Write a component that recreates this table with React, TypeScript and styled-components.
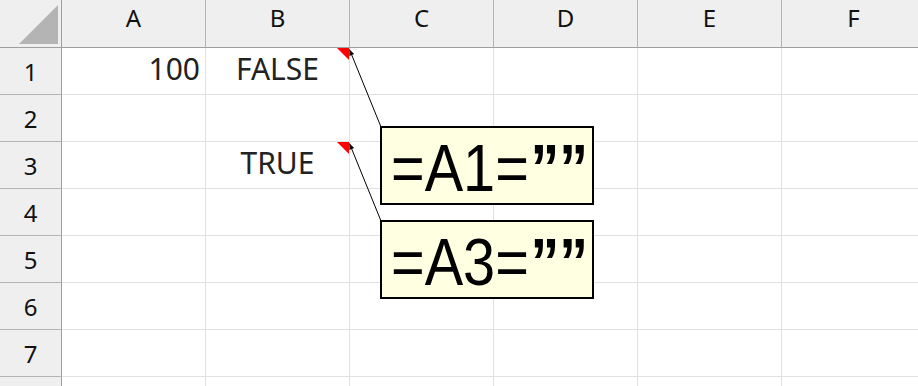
import React from "react";
import styled, { createGlobalStyle } from "styled-components";

const Global = createGlobalStyle`
  html, body { margin: 0; padding: 0; background: #ffffff; }
  body { width: 918px; height: 386px; overflow: hidden; }
`;

const Sheet = styled.div`
  position: relative;
  width: 918px;
  height: 386px;
  overflow: hidden;
  background: #ffffff;
  font-family: "Noto Sans", "Liberation Sans", sans-serif;
`;

const Grid = styled.div`
  display: grid;
  grid-template-columns: 62px repeat(6, 144px);
  grid-template-rows: 48px repeat(8, 47px);
`;

const Corner = styled.div`
  background: #efefef;
  border-right: 1px solid #9e9e9e;
  border-bottom: 1px solid #9e9e9e;
  box-sizing: border-box;
  position: relative;
`;

const ColHeader = styled.div`
  background: #efefef;
  border-right: 1px solid #b4b4b4;
  border-bottom: 1px solid #9e9e9e;
  box-sizing: border-box;
  display: flex;
  justify-content: center;
  align-items: flex-start;
  padding-top: 3px;
  font-size: 24px;
  line-height: 30px;
  color: #111111;
`;

const RowHeader = styled.div`
  background: #efefef;
  border-right: 1px solid #9e9e9e;
  border-bottom: 1px solid #b4b4b4;
  box-sizing: border-box;
  display: flex;
  justify-content: center;
  align-items: center;
  padding-top: 2px;
  font-size: 24px;
  line-height: 30px;
  color: #111111;
`;

const Cell = styled.div<{ $align: "left" | "center" | "right" }>`
  border-right: 1px solid #e1e1e1;
  border-bottom: 1px solid #e1e1e1;
  box-sizing: border-box;
  display: flex;
  align-items: flex-end;
  justify-content: ${(p) =>
    p.$align === "right" ? "flex-end" : p.$align === "center" ? "center" : "flex-start"};
  padding: 0 5px 10px 5px;
  font-size: 30px;
  line-height: 30px;
  color: #222222;
  white-space: nowrap;
`;

const Overlay = styled.svg`
  position: absolute;
  left: 0;
  top: 0;
  width: 918px;
  height: 386px;
  pointer-events: none;
`;

const CommentBox = styled.div<{ $top: number }>`
  position: absolute;
  left: 380px;
  top: ${(p) => p.$top}px;
  width: 214px;
  height: 79px;
  box-sizing: border-box;
  border: 2px solid #000000;
  background: #ffffe1;
  overflow: hidden;
  display: flex;
  align-items: center;
`;

const CommentText = styled.span`
  font-family: "Liberation Sans", Arial, sans-serif;
  font-size: 67px;
  line-height: 75px;
  padding-top: 4px;
  color: #000000;
  white-space: nowrap;
  display: inline-block;
  transform-origin: left center;
  transform: translateX(9px) scaleX(0.86);
`;

const Quotes = styled.span`
  font-weight: bold;
  letter-spacing: 0px;
  margin-left: 2px;
`;

const cols = ["A", "B", "C", "D", "E", "F"];
const rows = [1, 2, 3, 4, 5, 6, 7, 8];

const data: Record<string, { text: string; align: "left" | "center" | "right" }> = {
  "A1": { text: "100", align: "right" },
  "B1": { text: "FALSE", align: "center" },
  "B3": { text: "TRUE", align: "center" },
};

function Arrow({ x1, y1, x2, y2 }: { x1: number; y1: number; x2: number; y2: number }) {
  const dx = x2 - x1;
  const dy = y2 - y1;
  const len = Math.hypot(dx, dy);
  const ux = dx / len;
  const uy = dy / len;
  const bx = x1 + ux * 6;
  const by = y1 + uy * 6;
  const px = -uy * 2.6;
  const py = ux * 2.6;
  return (
    <g>
      <line x1={x1} y1={y1} x2={x2} y2={y2} stroke="#000" strokeWidth={1} />
      <polygon
        points={`${x1},${y1} ${bx + px},${by + py} ${bx - px},${by - py}`}
        fill="#000"
      />
    </g>
  );
}

export default function App() {
  return (
    <>
      <Global />
      <Sheet>
        <Grid>
          <Corner>
            <svg width="61" height="47" style={{ position: "absolute", left: 0, top: 0 }}>
              <polygon points="58,5 58,44 19,44" fill="#b4b4b4" />
            </svg>
          </Corner>
          {cols.map((c) => (
            <ColHeader key={c}>{c}</ColHeader>
          ))}
          {rows.map((r) => (
            <React.Fragment key={r}>
              <RowHeader>{r < 8 ? r : ""}</RowHeader>
              {cols.map((c) => {
                const d = data[`${c}${r}`];
                return (
                  <Cell key={c} $align={d ? d.align : "left"}>
                    {d ? d.text : ""}
                  </Cell>
                );
              })}
            </React.Fragment>
          ))}
        </Grid>
        <Overlay viewBox="0 0 918 386">
          <polygon points="337,48 349,48 349,60" fill="#ff0000" />
          <polygon points="337,142 349,142 349,154" fill="#ff0000" />
          <Arrow x1={349.5} y1={49.5} x2={381} y2={127} />
          <Arrow x1={349.5} y1={143.5} x2={381} y2={221} />
        </Overlay>
        <CommentBox $top={126}>
          <CommentText>
            =A1=<Quotes>””</Quotes>
          </CommentText>
        </CommentBox>
        <CommentBox $top={220}>
          <CommentText>
            =A3=<Quotes>””</Quotes>
          </CommentText>
        </CommentBox>
      </Sheet>
    </>
  );
}
